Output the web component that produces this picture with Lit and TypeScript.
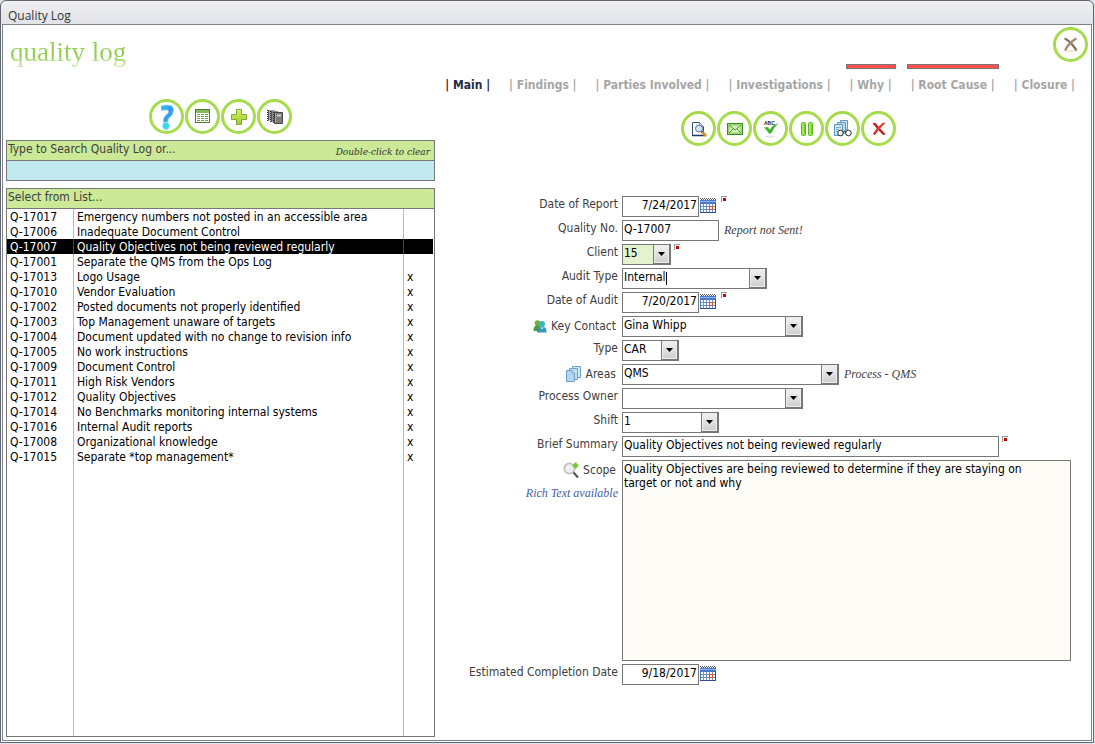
import { LitElement, html, css, nothing, TemplateResult } from "lit";
import { customElement, property, state } from "lit/decorators.js";
import { classMap } from "lit/directives/class-map.js";

const icons: Record<string, TemplateResult> = {
  help: html`<svg viewBox="0 0 26 26" width="26" height="26" aria-hidden="true">
    <defs>
      <linearGradient id="hg" x1="0" y1="0" x2="1" y2="1">
        <stop offset="0" stop-color="#2fc3f0" /><stop offset="0.55" stop-color="#3b95f2" /><stop offset="1" stop-color="#2fd8f0" />
      </linearGradient>
    </defs>
    <path d="M7 2Q12 .2 16 1.300Q20 2.500 19.500 7Q19 11.500 15.500 13.500Q13.800 15 14 18L9.500 18.500Q8.500 14 11.500 11.500Q15 9 14.500 7Q13.500 5 7.400 6.800Z" fill="url(#hg)" stroke="#9edcf2" stroke-width=".6" />
    <circle cx="12" cy="22" r="3.400" fill="#2fdcec" stroke="#9edcf2" stroke-width=".6" />
  </svg>`,
  list: html`<svg viewBox="0 0 15 15" width="15" height="15" aria-hidden="true">
    <rect x=".5" y=".5" width="14" height="13" fill="#fff" stroke="#4f7d2c" />
    <path d="M1 1h13v3H1z" fill="#86b95c" />
    <path d="M2 5.500h3M6 5.500h3M10 5.500h3M2 7.500h3M6 7.500h3M10 7.500h3M2 9.500h3M6 9.500h3M10 9.500h3M2 11.500h3M6 11.500h3M10 11.500h3" stroke="#6ea546" />
  </svg>`,
  add: html`<svg viewBox="0 0 16 16" width="16" height="16" aria-hidden="true">
    <defs><linearGradient id="ag" x1="0" y1="0" x2="0" y2="1"><stop offset="0" stop-color="#d6ee5a" /><stop offset="1" stop-color="#98cf30" /></linearGradient></defs>
    <path d="M5.500.5h5v5h5v5h-5v5h-5v-5h-5v-5h5z" fill="url(#ag)" stroke="#86a83a" stroke-linejoin="round" />
  </svg>`,
  books: html`<svg viewBox="0 0 16 16" width="16" height="16" aria-hidden="true">
    <path d="M1 1h7v10.500H1z" fill="#a5a5a5" /><path d="M4 2h7v11H4z" fill="#8a8a8a" />
    <path d="M7.500 3.500h8v11h-8z" fill="#7b7b7b" stroke="#444" />
    <path d="M10 5.500h4v2h-4z" fill="#cfcfcf" /><path d="M8.500 4v10" stroke="#aaa" />
    <path d="M.5 1v11M3.500 2v12M6.500 3v12" stroke="#333" stroke-dasharray="1 1" fill="none" />
    <path d="M1.500 1v10.500M4.500 2v11" stroke="#555" />
  </svg>`,
  close: html`<svg viewBox="0 0 16 16" width="16" height="16" aria-hidden="true">
    <ellipse cx="7.500" cy="14" rx="6.500" ry="1" fill="#fae3cb" />
    <path d="M2.500 2Q7 4 13 12.500" stroke="#85715a" stroke-width="2.400" fill="none" stroke-linecap="round" />
    <path d="M12.500 2Q6 6 2.500 12.500" stroke="#a08b6e" stroke-width="2.400" fill="none" stroke-linecap="round" />
  </svg>`,
  preview: html`<svg viewBox="0 0 16 16" width="16" height="16" aria-hidden="true">
    <path d="M1.500 1.500h7l4 4v9h-11z" fill="#fff" stroke="#31537c" /><path d="M1 14.500h12" stroke="#1e3a60" stroke-width="1.500" />
    <path d="M8.500 1.500v4h4" fill="#dbe7f5" stroke="#5b7ca5" stroke-width=".7" />
    <circle cx="8" cy="7.500" r="3.500" fill="#cfe1f6" fill-opacity=".9" stroke="#5e7390" />
    <path d="M10.500 10.500l1.500 1.500" stroke="#555" stroke-width="2" /><path d="M12 12l2.200 2.200" stroke="#d98b35" stroke-width="3" stroke-linecap="round" />
  </svg>`,
  mail: html`<svg viewBox="0 0 16 12" width="16" height="12" aria-hidden="true">
    <rect x=".5" y=".5" width="15" height="11" fill="#b5e38a" stroke="#3f8a20" />
    <rect x="2" y="2" width="12" height="8" fill="#d3f0ba" stroke="#6bb043" stroke-width=".6" />
    <path d="M2 2l6 5 6-5M2 10l4.500-4.500M14 10L9.500 5.500" stroke="#4c9a2a" fill="none" />
  </svg>`,
  spell: html`<svg viewBox="0 0 20 20" width="20" height="20" aria-hidden="true">
    <ellipse cx="9" cy="17.500" rx="5" ry="1" fill="#e2e2e2" />
    <path d="M3 8.500L7 8Q8 9.500 8.600 11Q11 6 17 4.500Q12.500 9 10 14.500H8Q6 11 3 8.500Z" fill="#3fae2a" stroke="#8fd47d" stroke-width=".5" />
    <text x="3" y="6" font-size="5" font-weight="700" font-family="Liberation Sans, sans-serif" fill="#222">ABC</text>
  </svg>`,
  pause: html`<svg viewBox="0 0 16 16" width="16" height="16" aria-hidden="true">
    <rect x="2.500" y="1.500" width="4" height="13" rx="1" fill="#a4ea4c" stroke="#5cb82a" />
    <rect x="9.500" y="1.500" width="4" height="13" rx="1" fill="#a4ea4c" stroke="#5cb82a" />
    <path d="M5.500 3v10M12.500 3v10" stroke="#6ccb33" />
  </svg>`,
  review: html`<svg viewBox="0 0 20 20" width="20" height="20" aria-hidden="true">
    <path d="M7.500 1.500h7v9h-7z" fill="#d9eaf7" stroke="#5c97c4" /><path d="M4.500 3.500h8v11h-8z" fill="#bcd9ee" stroke="#5c97c4" />
    <path d="M1.500 5.500h8v11h-8z" fill="#cfe4f3" stroke="#5c97c4" />
    <path d="M3 8.500h5M3 10.500h3M3 12.500h2" stroke="#7fb0d6" />
    <circle cx="7.500" cy="14" r="2.800" fill="#e9eef2" fill-opacity=".9" stroke="#333" />
    <circle cx="15.500" cy="14" r="2.800" fill="#f8f8f8" stroke="#333" />
    <path d="M10 13q1.500-1.200 3 0" fill="none" stroke="#333" />
  </svg>`,
  remove: html`<svg viewBox="0 0 16 16" width="16" height="16" aria-hidden="true">
    <path d="M1.500 2.500Q4 1 5.500 3Q8 6.500 14.500 13Q12.500 15 11 13Q7 9 1.500 2.500Z" fill="#c22323" />
    <path d="M14.500 2Q13 1 11 2.500Q5 7 2 12.500Q3 15 5 13Q8 8 14.500 2Z" fill="#d93838" />
  </svg>`,
  calendar: html`<svg viewBox="0 0 16 16" width="16" height="16" aria-hidden="true">
    <path d="M0 2h16v13H0z" fill="#4a78c8" /><path d="M1 6h14v8H1z" fill="#fff" />
    <path d="M0 .5h16M1 1.500h16" stroke="#555" stroke-dasharray="1 1" />
    <path d="M0 3.500h16" stroke="#8fb4ee" /><path d="M1 8.500h14M1 11.500h14M3.500 6v8M6.500 6v8M9.500 6v8M12.500 6v8" stroke="#6f92cf" />
    <rect x="9.500" y="8.500" width="3" height="3" fill="#fff" stroke="#e04a1c" /><path d="M0 14.500h16M15.500 5v10" stroke="#2d4d92" />
  </svg>`,
  people: html`<svg viewBox="0 0 14 14" width="14" height="14" aria-hidden="true">
    <circle cx="4.500" cy="4" r="2.800" fill="#6fb43c" /><path d="M.5 12q0-6 4-6t4 6z" fill="#4d9c3a" />
    <circle cx="9" cy="5" r="3" fill="#39b4c8" /><path d="M4 13.500q0-6 5-6t4.500 6z" fill="#3697b8" /><path d="M7 8.500l2 2 2-2z" fill="#bfeaf2" />
  </svg>`,
  pages: html`<svg viewBox="0 0 16 18" width="16" height="18" aria-hidden="true">
    <path d="M6.500 1.500h8v11h-8z" fill="#d5e8f6" stroke="#6ba3cd" /><path d="M3.500 3.500h8v11h-8z" fill="#c4def1" stroke="#6ba3cd" />
    <path d="M.5 5.500H6L8.500 8v8.500h-8z" fill="#b3d5ee" stroke="#6ba3cd" /><path d="M6 5.500V8h2.500" fill="#fff" stroke="#6ba3cd" />
  </svg>`,
  zoom: html`<svg viewBox="0 0 16 16" width="16" height="16" aria-hidden="true">
    <circle cx="6.500" cy="6.500" r="5.200" fill="#eef0f1" stroke="#bfc2c4" stroke-width="1.800" />
    <path d="M10.500 10.500l4.500 5" stroke="#555" stroke-width="2.200" /><path d="M12.500.5v6M9.500 3.500h6" stroke="#7ac636" stroke-width="2.400" />
  </svg>`,
};

const base = css`
  * { box-sizing: border-box; }
  svg { display: block; flex: none; }
  button { font: inherit; color: inherit; cursor: pointer; padding: 0; border: 0; background: none; }
`;

@customElement("round-button")
class RoundButton extends LitElement {
  @property() icon = "";
  @property() label = "";
  static styles = [base, css`
    :host { display: block; flex: none; }
    .round { display: grid; place-items: center; width: 35px; height: 35px; border: 3px solid #a6db4c; border-radius: 50%; background: #fff; }
  `];
  render() {
    return html`<button class="round" aria-label=${this.label} title=${this.label}>${icons[this.icon]}</button>`;
  }
}

interface Entry { no: string; title: string; closed: boolean; }
const entries: Entry[] = [
  ["Q-17017", "Emergency numbers not posted in an accessible area", false],
  ["Q-17006", "Inadequate Document Control", false],
  ["Q-17007", "Quality Objectives not being reviewed regularly", false],
  ["Q-17001", "Separate the QMS from the Ops Log", false],
  ["Q-17013", "Logo Usage", true],
  ["Q-17010", "Vendor Evaluation", true],
  ["Q-17002", "Posted documents not properly identified", true],
  ["Q-17003", "Top Management unaware of targets", true],
  ["Q-17004", "Document updated with no change to revision info", true],
  ["Q-17005", "No work instructions", true],
  ["Q-17009", "Document Control", true],
  ["Q-17011", "High Risk Vendors", true],
  ["Q-17012", "Quality Objectives", true],
  ["Q-17014", "No Benchmarks monitoring internal systems", true],
  ["Q-17016", "Internal Audit reports", true],
  ["Q-17008", "Organizational knowledge", true],
  ["Q-17015", "Separate *top management*", true],
].map(([no, title, closed]) => ({ no, title, closed }) as Entry);

@customElement("quality-list")
class QualityList extends LitElement {
  @state() private selected = "Q-17007";
  static styles = [base, css`
    :host { display: flex; flex-direction: column; gap: 7px; min-height: 0; }
    .box { border: 1px solid #777; }
    .head { display: flex; justify-content: space-between; height: 20px; padding: 0 4px 0 1px; line-height: 17px; background: #cbe996; color: #404040; border-bottom: 1px solid #777; }
    .hint { font: italic 10px/22px "DejaVu Serif Condensed", "DejaVu Serif", serif; color: #333; }
    .search { display: block; width: 100%; height: 19px; padding: 0 2px; border: 0; background: #c1e8ef; font: inherit; }
    .search:focus { outline: 0; }
    .list { flex: 1; display: flex; flex-direction: column; }
    .rows { flex: 1; display: grid; margin-right: 1px; }
    table { width: 100%; height: 100%; border-collapse: separate; border-spacing: 0; table-layout: fixed; color: #000; }
    td { height: 15px; padding: 1px 3px 0; line-height: 14px; white-space: nowrap; overflow: hidden; }
    .no { width: 67px; border-right: 1px solid #bbb; }
    .title { border-right: 1px solid #bbb; }
    .mark { width: 29px; }
    .row { cursor: default; }
    .selected { background: #000; color: #fff; }
    .selected td { border-color: #444; }
    .rest td { height: auto; }
  `];
  render() {
    return html`
      <div class="box">
        <div class="head"><label for="q">Type to Search Quality Log or...</label><span class="hint">Double-click to clear</span></div>
        <input id="q" class="search" type="text" @dblclick=${(e: Event) => ((e.target as HTMLInputElement).value = "")} />
      </div>
      <div class="box list">
        <div class="head">Select from List...</div>
        <div class="rows">
          <table aria-label="Quality log entries">
            <tbody>
              ${entries.map((e) => html`<tr class=${classMap({ row: true, selected: e.no === this.selected })} @click=${() => (this.selected = e.no)}>
                <td class="no">${e.no}</td><td class="title">${e.title}</td><td class="mark">${e.closed ? "x" : nothing}</td>
              </tr>`)}
              <tr class="rest" aria-hidden="true"><td class="no"></td><td class="title"></td><td class="mark"></td></tr>
            </tbody>
          </table>
        </div>
      </div>`;
  }
}

@customElement("quality-form")
class QualityForm extends LitElement {
  static styles = [base, css`
    :host { display: grid; grid-template-columns: 183px minmax(0, 1fr); column-gap: 4px; row-gap: 3px; }
    .label { display: flex; justify-content: flex-end; height: 21px; line-height: 16px; color: #404040; white-space: nowrap; }
    .linked { align-items: center; gap: 4px; line-height: 18px; padding: 0 2px 2px 0; }
    .stack { display: flex; flex-direction: column; gap: 3px; }
    .field { display: flex; min-width: 0; }
    .text { display: block; height: 21px; padding: 0 1px 4px; border: 1px solid #777; border-radius: 0; background: #fff; color: #000; font: inherit; min-width: 0; }
    .date { width: 77px; text-align: right; padding-left: 0; }
    .number { width: 97px; }
    .summary { width: 377px; }
    .calendar { width: 16px; height: 16px; margin: 2px 0 0 1px; }
    .required { flex: none; width: 6px; height: 6px; margin-left: 3px; border: 1px solid #999; border-width: 1px 0 0 1px; background: linear-gradient(#c00000, #c00000) 1px 1px / 3px 3px no-repeat; }
    .calendar + .required { margin-left: 5px; }
    .note { margin-left: 5px; font: italic 12px/20px "Liberation Serif", serif; color: #404040; white-space: nowrap; }
    .rich { align-self: flex-end; font: italic 12px/18px "Liberation Serif", serif; color: #3f5f9f; text-decoration: none; white-space: nowrap; }
    .combo { display: grid; grid-template-columns: minmax(0, 1fr) 18px; height: 21px; }
    .combo select { grid-area: 1 / 1 / 2 / 3; appearance: none; width: 100%; height: 21px; line-height: 14px; outline: 0; }
    .arrow { grid-area: 1 / 2; z-index: 1; display: grid; place-items: center; border: 1px solid #777; border-right-width: 2px; border-bottom-width: 2px; background: linear-gradient(#f2f2f2, #cfcfcf); pointer-events: none; box-shadow: inset 0 0 0 1px #eee; }
    .w49 { width: 49px; } .w57 { width: 57px; } .w97 { width: 97px; }
    .w145 { width: 145px; } .w181 { width: 181px; } .w217 { width: 217px; }
    .tinted select { background: #e4f3cd; }
    .editing select { background: linear-gradient(#000, #000) 43px 3px / 1px 13px no-repeat #fff; }
    .scope { width: 100%; height: 201px; padding: 1px 18px 1px 1px; line-height: 14px; resize: none; background: #fdfcf7; }
    .scope-cell { padding-right: 20px; }
  `];

  private label(id: string, text: string, icon?: string) {
    return icon
      ? html`<label class="label linked" for=${id}>${icons[icon]}${text}</label>`
      : html`<label class="label" for=${id}>${text}</label>`;
  }
  private date(id: string, text: string, value: string, required = false) {
    return html`${this.label(id, text)}
      <div class="field"><input id=${id} class="text date" type="text" .value=${value} />
        <button class="calendar" aria-label="Pick a date">${icons.calendar}</button>
        ${required ? html`<span class="required"></span>` : nothing}</div>`;
  }
  private combo(id: string, text: string, value: string, size: string, extra: unknown = nothing, icon?: string) {
    return html`${this.label(id, text, icon)}
      <div class="field"><div class="combo ${size}">
        <select id=${id} class="text"><option>${value}</option></select>
        <span class="arrow"><svg viewBox="0 0 7 4" width="7" height="4" aria-hidden="true"><path d="M0 0h7L3.500 4z" /></svg></span>
      </div>${extra}</div>`;
  }
  render() {
    const required = html`<span class="required"></span>`;
    return html`
      ${this.date("report", "Date of Report", "7/24/2017", true)}
      ${this.label("number", "Quality No.")}
      <div class="field"><input id="number" class="text number" type="text" .value=${"Q-17007"} /><span class="note">Report not Sent!</span></div>
      ${this.combo("client", "Client", "15", "w49 tinted", required)}
      ${this.combo("audit-type", "Audit Type", "Internal", "w145 editing")}
      ${this.date("audit", "Date of Audit", "7/20/2017", true)}
      ${this.combo("contact", "Key Contact", "Gina Whipp", "w181", nothing, "people")}
      ${this.combo("type", "Type", "CAR", "w57")}
      ${this.combo("areas", "Areas", "QMS", "w217", html`<span class="note">Process - QMS</span>`, "pages")}
      ${this.combo("owner", "Process Owner", "", "w181")}
      ${this.combo("shift", "Shift", "1", "w97")}
      ${this.label("summary", "Brief Summary")}
      <div class="field"><input id="summary" class="text summary" type="text" .value=${"Quality Objectives not being reviewed regularly"} />${required}</div>
      <div class="stack">${this.label("scope", "Scope", "zoom")}<a class="rich" href="#rich">Rich Text available</a></div>
      <div class="scope-cell"><textarea id="scope" class="text scope" .value=${"Quality Objectives are being reviewed to determine if they are staying on target or not and why"}></textarea></div>
      ${this.date("completion", "Estimated Completion Date", "9/18/2017")}
    `;
  }
}

@customElement("app-root")
class AppRoot extends LitElement {
  @state() private tab = "Main";
  private tabs = ["Main", "Findings", "Parties Involved", "Investigations", "Why", "Root Cause", "Closure"];
  private flagged = ["Why", "Root Cause"];
  static styles = [base, css`
    :host { display: block; padding: 0 1px 1px 0; font: 12px/15px "DejaVu Sans Condensed", "DejaVu Sans", sans-serif; background: #dfe3ea; }
    .window { display: flex; flex-direction: column; min-height: calc(100vh - 1px); padding: 0 1px 1px; border: 1px solid #5f6671; border-radius: 6px 6px 0 0; background: linear-gradient(#f0f0f2, #e0e2e7) 0 0 / 100% 24px no-repeat #fff; }
    .title { height: 23px; margin: 0; padding: 0 6px; font: 12px/30px "Open Sans", sans-serif; color: #333; }
    .page { flex: 1; display: grid; grid-template-columns: 429px minmax(0, 1fr); padding: 0 0 3px 3px; border: 1px solid #7d828a; background: #fff; }
    .side { display: flex; flex-direction: column; }
    .logo { height: 74px; padding-left: 4px; font: 27px/54px "Liberation Serif", serif; }
    .fade { color: transparent; background: linear-gradient(#92d050 65%, #c4e69f 90%); background-clip: text; }
    .tools { display: flex; gap: 1px; }
    .side .tools { justify-content: center; margin: 0 0 6px; }
    quality-list { flex: 1; }
    .main { display: flex; flex-direction: column; align-items: stretch; }
    .close { display: flex; justify-content: flex-end; height: 39px; padding: 2px 3px 0 0; }
    .tabs { display: flex; justify-content: flex-end; align-items: flex-start; gap: 11px; height: 47px; padding: 0 12px 0 0; }
    .tab { padding: 14px 4px 0; font: bold 12px/15px "DejaVu Sans Condensed", "DejaVu Sans", sans-serif; color: #a6a6a6; white-space: nowrap; }
    .current { color: #1f2a44; }
    .flagged { background: linear-gradient(#ff4f4f, #ff4f4f) 1px 1px / calc(100% - 2px) 3px no-repeat, linear-gradient(#777, #777) 0 0 / 100% 5px no-repeat; }
    .main .tools { padding-left: 246px; height: 85px; }
  `];
  render() {
    return html`<div class="window">
      <h1 class="title">Quality Log</h1>
      <div class="page">
        <section class="side">
          <div class="logo"><span class="fade">quality log</span></div>
          <div class="tools">
            <round-button icon="help" label="Help"></round-button>
            <round-button icon="list" label="List view"></round-button>
            <round-button icon="add" label="Add"></round-button>
            <round-button icon="books" label="Copy"></round-button>
          </div>
          <quality-list></quality-list>
        </section>
        <section class="main">
          <div class="close"><round-button icon="close" label="Close"></round-button></div>
          <nav class="tabs">
            ${this.tabs.map((t) => html`<button class=${classMap({ tab: true, current: t === this.tab, flagged: this.flagged.includes(t) })} @click=${() => (this.tab = t)}>| ${t} |</button>`)}
          </nav>
          <div class="tools">
            <round-button icon="preview" label="Preview"></round-button>
            <round-button icon="mail" label="E-mail"></round-button>
            <round-button icon="spell" label="Check spelling"></round-button>
            <round-button icon="pause" label="Pause"></round-button>
            <round-button icon="review" label="Review"></round-button>
            <round-button icon="remove" label="Delete"></round-button>
          </div>
          <quality-form></quality-form>
        </section>
      </div>
    </div>`;
  }
}
